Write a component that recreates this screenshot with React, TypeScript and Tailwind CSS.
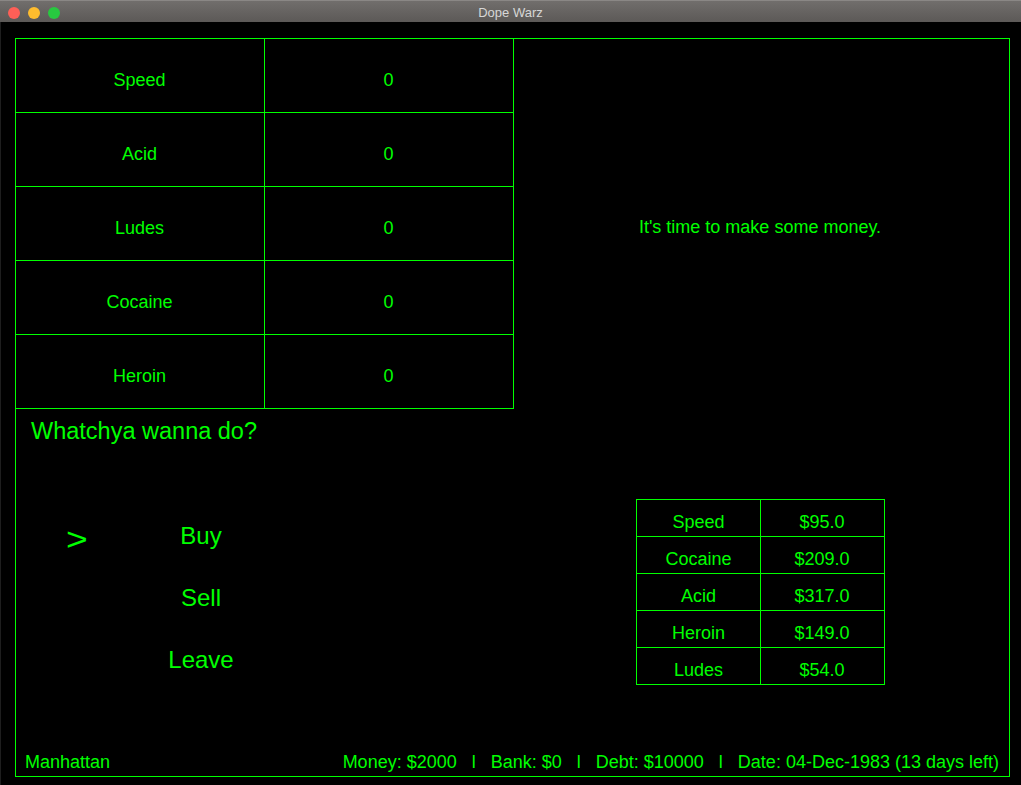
import React from "react";

const inventory = ["Speed", "Acid", "Ludes", "Cocaine", "Heroin"];
const prices: [string, string][] = [
  ["Speed", "$95.0"],
  ["Cocaine", "$209.0"],
  ["Acid", "$317.0"],
  ["Heroin", "$149.0"],
  ["Ludes", "$54.0"],
];
const menu = ["Buy", "Sell", "Leave"];

export default function App() {
  return (
    <div className="w-[1021px] h-[785px] bg-black flex flex-col overflow-hidden font-['Liberation_Sans',Arial,sans-serif] text-[#00ff00]">
      {/* Title bar */}
      <div className="relative h-[22px] shrink-0 bg-gradient-to-b from-[#716e6c] to-[#5c5957] border-t border-[#8a8785] flex justify-center">
        <div className="absolute left-[8px] top-[6px] flex gap-[8px]">
          <div className="w-[12px] h-[12px] rounded-full bg-[#fe5f57]" />
          <div className="w-[12px] h-[12px] rounded-full bg-[#febc2e]" />
          <div className="w-[12px] h-[12px] rounded-full bg-[#28c840]" />
        </div>
        <div className="pt-[4px] text-[13px] leading-[16px] text-[#d6d6d6]">Dope Warz</div>
      </div>

      {/* Content */}
      <div className="flex-1 pl-[15px] pt-[16px] border-l border-[#1e1e1e]">
        <div className="w-[995px] h-[739px] -ml-[1px] border border-[#00ff00] flex flex-col">
          {/* Top section */}
          <div className="flex h-[370px] shrink-0">
            <div className="w-[498px] flex flex-col">
              {inventory.map((name) => (
                <div key={name} className="h-[74px] border-b border-[#00ff00] flex text-[18px] leading-[21px]">
                  <div className="w-[249px] border-r border-[#00ff00] flex items-center justify-center pt-[9px] pr-[1px]">
                    {name}
                  </div>
                  <div className="w-[249px] border-r border-[#00ff00] flex items-center justify-center pt-[9px] pr-[1px]">
                    0
                  </div>
                </div>
              ))}
            </div>
            <div className="flex-1 flex items-center justify-center pt-[7px] pr-[3px] text-[18px] leading-[21px]">
              It's time to make some money.
            </div>
          </div>

          {/* Bottom section */}
          <div className="flex-1 flex">
            <div className="w-[498px] flex flex-col">
              <div className="pl-[15px] pt-[8px] text-[23.5px] leading-[28px]">Whatchya wanna do?</div>
              <div className="mt-[60px] flex flex-col">
                {menu.map((m, i) => (
                  <div key={m} className="h-[62px] flex items-center">
                    <div className="w-[104px] pl-[50px] flex items-center">
                      {i === 0 && (
                        <span className="inline-block mt-[7px] text-[31px] leading-[31px] scale-x-[1.2] origin-left">
                          &gt;
                        </span>
                      )}
                    </div>
                    <div className="w-[162px] text-center text-[24px] leading-[28px]">{m}</div>
                  </div>
                ))}
              </div>
            </div>
            <div className="flex-1 flex pl-[122px] pt-[90px]">
              <div className="w-[249px] h-max border-l border-r border-t border-[#00ff00] flex flex-col text-[18px] leading-[21px]">
                {prices.map(([n, p]) => (
                  <div key={n} className="h-[37px] border-b border-[#00ff00] flex">
                    <div className="w-[124px] border-r border-[#00ff00] flex items-center justify-center pt-[9px]">
                      {n}
                    </div>
                    <div className="flex-1 flex items-center justify-center pt-[9px] pr-[1px]">{p}</div>
                  </div>
                ))}
              </div>
            </div>
          </div>

          {/* Footer */}
          <div className="flex justify-between pl-[9px] pr-[10px] pb-[3px] text-[18px] leading-[21px] whitespace-pre">
            <span>Manhattan</span>
            <span>{"Money: $2000   l   Bank: $0   l   Debt: $10000   l   Date: 04-Dec-1983 (13 days left)"}</span>
          </div>
        </div>
      </div>
    </div>
  );
}
